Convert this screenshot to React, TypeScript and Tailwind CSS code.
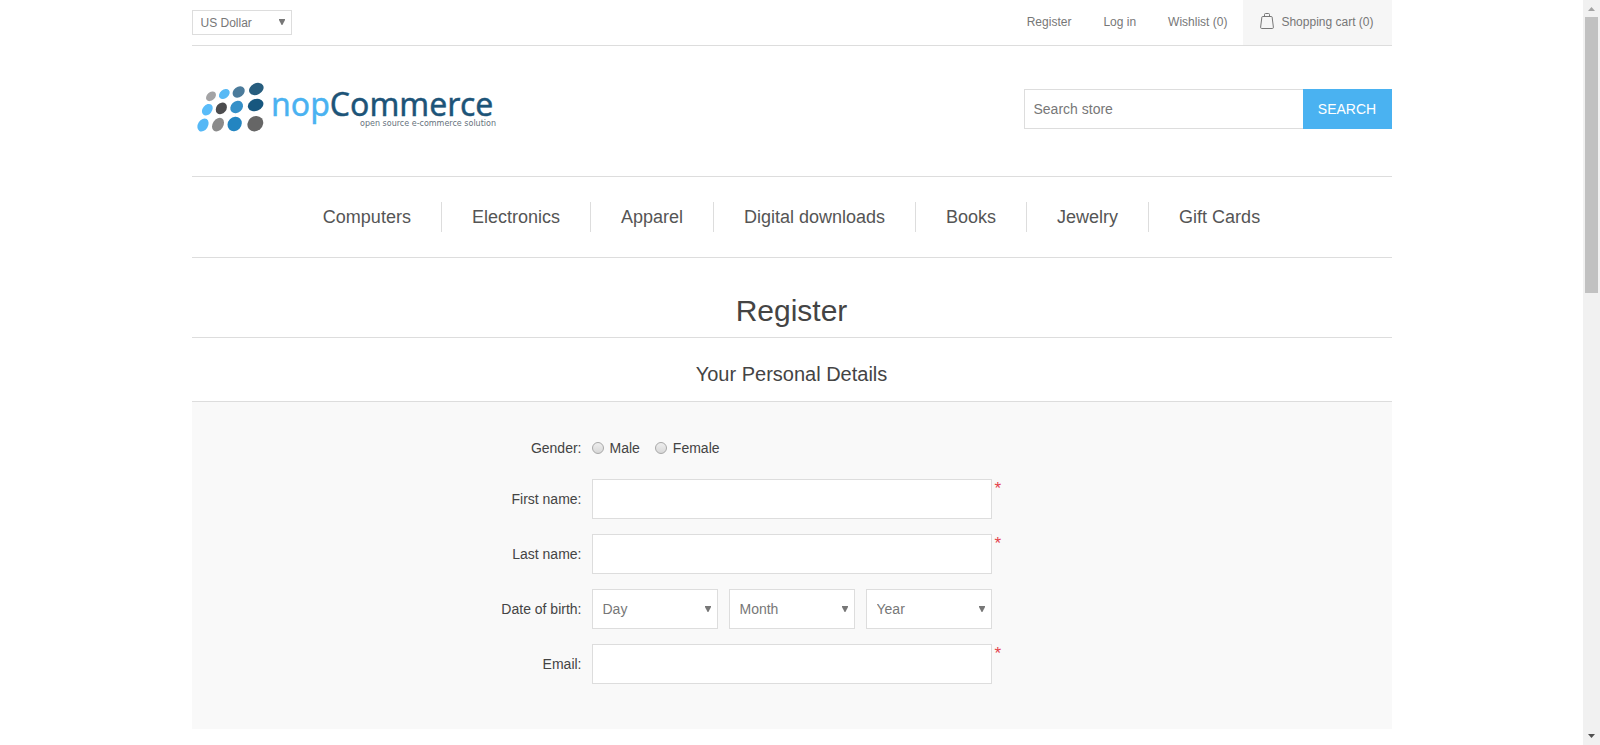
import React from "react";

const categories = ["Computers", "Electronics", "Apparel", "Digital downloads", "Books", "Jewelry", "Gift Cards"];

function Arrow({ className }: { className: string }) {
  return (
    <svg aria-hidden="true" viewBox="0 0 6 6" className={`pointer-events-none absolute h-[6px] w-[6px] ${className}`}>
      <path d="M0 0H6V1L3.4 6H2.6L0 1Z" fill="#777" />
    </svg>
  );
}

function Logo() {
  const dots: [number, number, number, number, number, string][] = [
    [93, 79, 17, 12, -42, "#a3a3a5"],
    [133, 72, 18, 13, -40, "#57b9f5"],
    [176, 66, 20, 15, -38, "#4b7b9b"],
    [229, 57, 23, 17, -28, "#275d7e"],
    [82, 119, 19, 14, -50, "#5abcf9"],
    [124, 115, 19, 15, -50, "#4c4c4e"],
    [170, 111, 21, 17, -44, "#3590c8"],
    [227, 105, 24, 18, -22, "#17577f"],
    [69, 165, 21, 15, -58, "#55b8f6"],
    [114, 164, 22, 16, -56, "#8b8b8b"],
    [164, 162, 23, 20, -46, "#2385c1"],
    [226, 161, 25, 22, -40, "#666666"],
  ];
  return (
    <svg viewBox="0 0 310 78" className="h-[78px] w-[310px]" role="img" aria-label="nopCommerce">
      <g transform="translate(-12 0) scale(0.3333)">
        {dots.map(([x, y, rx, ry, angle, fill], i) => (
          <ellipse key={i} cx={x} cy={y} rx={rx} ry={ry} fill={fill} transform={`rotate(${angle} ${x} ${y})`} />
        ))}
      </g>
      <text x="79" y="46" fontFamily="'Noto Sans', sans-serif" fontSize="32" fill="#4ab2f1" stroke="#4ab2f1" strokeWidth="0.4">
        nop
        <tspan fill="#1d5478" stroke="#1d5478">
          Commerce
        </tspan>
      </text>
      <text x="304" y="56" textAnchor="end" fontFamily="'DejaVu Sans', sans-serif" fontSize="8" fill="#66727c">
        open source e-commerce solution
      </text>
    </svg>
  );
}

function Row({ label, id, required, children }: { label: string; id: string; required?: boolean; children: React.ReactNode }) {
  return (
    <div className="grid grid-cols-[1fr_400px_1fr]">
      <label htmlFor={id} className="self-center pr-[10px] text-right">
        {label}
      </label>
      <div>{children}</div>
      <div className="pl-[3px] text-[17px] leading-5 text-[#e4434b]">{required ? "*" : ""}</div>
    </div>
  );
}

function TextBox({ id, type = "text" }: { id: string; type?: string }) {
  return <input id={id} type={type} className="block h-10 w-full border border-[#ddd] bg-white px-2 outline-none" />;
}

function DateSelect({ id, label }: { id: string; label: string }) {
  return (
    <div className="relative flex-1">
      <select
        id={id}
        aria-label={label}
        className="block h-10 w-full appearance-none border border-[#ddd] bg-white px-[10px] text-[#777] outline-none"
      >
        <option>{label}</option>
      </select>
      <Arrow className="right-[7px] top-[17px]" />
    </div>
  );
}

function Radio({ id, label }: { id: string; label: string }) {
  return (
    <span className="flex items-center gap-[6px]">
      <input
        id={id}
        type="radio"
        name="gender"
        className="h-3 w-3 appearance-none rounded-full border border-[#a8a8a8] bg-gradient-to-b from-[#eeeeee] to-[#d8d8d8] checked:bg-[#777]"
      />
      <label htmlFor={id}>{label}</label>
    </span>
  );
}

export default function App() {
  return (
    <div className="flex h-screen overflow-hidden bg-white font-['Liberation_Sans',Arial,sans-serif] text-sm text-[#444]">
      <div className="min-w-0 flex-1">
        <div className="mx-auto w-full max-w-[1200px]">
          <header>
            <div className="flex items-center justify-between border-b border-[#ddd] text-xs text-[#777]">
              <div className="relative">
                <select
                  aria-label="Currency"
                  className="block h-[25px] w-[100px] appearance-none border border-[#ddd] bg-white px-2 outline-none"
                >
                  <option>US Dollar</option>
                </select>
                <Arrow className="right-[7px] top-[9px]" />
              </div>
              <div className="flex items-center gap-8 leading-[44px]">
                <a href="#register" className="h-[45px]">Register</a>
                <a href="#login" className="h-[45px]">Log in</a>
                <div className="flex gap-4">
                  <a href="#wishlist" className="h-[45px]">Wishlist (0)</a>
                  <a href="#cart" className="flex h-[45px] gap-[7px] bg-[#f6f6f6] pr-[18px] pl-[17px]">
                    <svg viewBox="0 0 14 18" className="mt-3 h-[18px] w-[14px]" fill="none" stroke="#777" aria-hidden="true">
                      <path d="M2.5 4.5H11.5Q12 4.5 12.1 5L13.4 15.2Q13.5 16.5 12.3 16.5H1.7Q.5 16.5 .6 15.2L1.9 5Q2 4.5 2.5 4.5Z" />
                      <path d="M4.5 4.5V2.5Q4.5 1.5 5.5 1.5H8.5Q9.5 1.5 9.5 2.5V4.5" />
                    </svg>
                    Shopping cart (0)
                  </a>
                </div>
              </div>
            </div>
            <div className="flex items-center justify-between pt-6 pb-7">
              <a href="#home">
                <Logo />
              </a>
              <form className="flex">
                <input
                  type="text"
                  aria-label="Search store"
                  placeholder="Search store"
                  className="h-10 w-[279px] border border-r-0 border-[#ddd] px-[9px] outline-none placeholder:text-[#777]"
                />
                <button type="button" className="h-10 w-[89px] bg-[#4ab2f1] text-white">
                  SEARCH
                </button>
              </form>
            </div>
          </header>
          <nav className="flex justify-center border-y border-[#ddd] py-[25px] text-lg text-[#555]">
            {categories.map((name) => (
              <a key={name} href="#category" className="border-r border-[#ddd] px-[30px] leading-[30px] last:border-r-0">
                {name}
              </a>
            ))}
          </nav>
          <main>
            <h1 className="border-b border-[#ddd] pt-[29px] pb-[3px] text-center text-[30px] leading-[47px]">Register</h1>
            <h2 className="border-b border-[#ddd] pt-[21px] pb-[11px] text-center text-xl leading-[31px]">
              Your Personal Details
            </h2>
            <form className="flex flex-col gap-[15px] bg-[#f9f9f9] pt-[30px] pb-[45px]">
              <Row label="Gender:" id="male">
                <div className="flex h-8 items-center gap-[15px]">
                  <Radio id="male" label="Male" />
                  <Radio id="female" label="Female" />
                </div>
              </Row>
              <Row label="First name:" id="first" required>
                <TextBox id="first" />
              </Row>
              <Row label="Last name:" id="last" required>
                <TextBox id="last" />
              </Row>
              <Row label="Date of birth:" id="day">
                <div className="flex gap-[11px]">
                  <DateSelect id="day" label="Day" />
                  <DateSelect id="month" label="Month" />
                  <DateSelect id="year" label="Year" />
                </div>
              </Row>
              <Row label="Email:" id="email" required>
                <TextBox id="email" type="email" />
              </Row>
            </form>
          </main>
        </div>
      </div>
      <div aria-hidden="true" className="flex w-[17px] flex-col items-center justify-between bg-[#f1f1f1]">
        <div className="flex flex-col items-center">
          <svg viewBox="0 0 17 17" className="h-[17px] w-[17px]">
            <path d="M5 11H12L8.5 7Z" fill="#a3a3a3" />
          </svg>
          <div className="h-[276px] w-[13px] bg-[#c1c1c1]" />
        </div>
        <svg viewBox="0 0 17 17" className="h-[17px] w-[17px]">
          <path d="M5 6H12L8.5 10Z" fill="#505050" />
        </svg>
      </div>
    </div>
  );
}
